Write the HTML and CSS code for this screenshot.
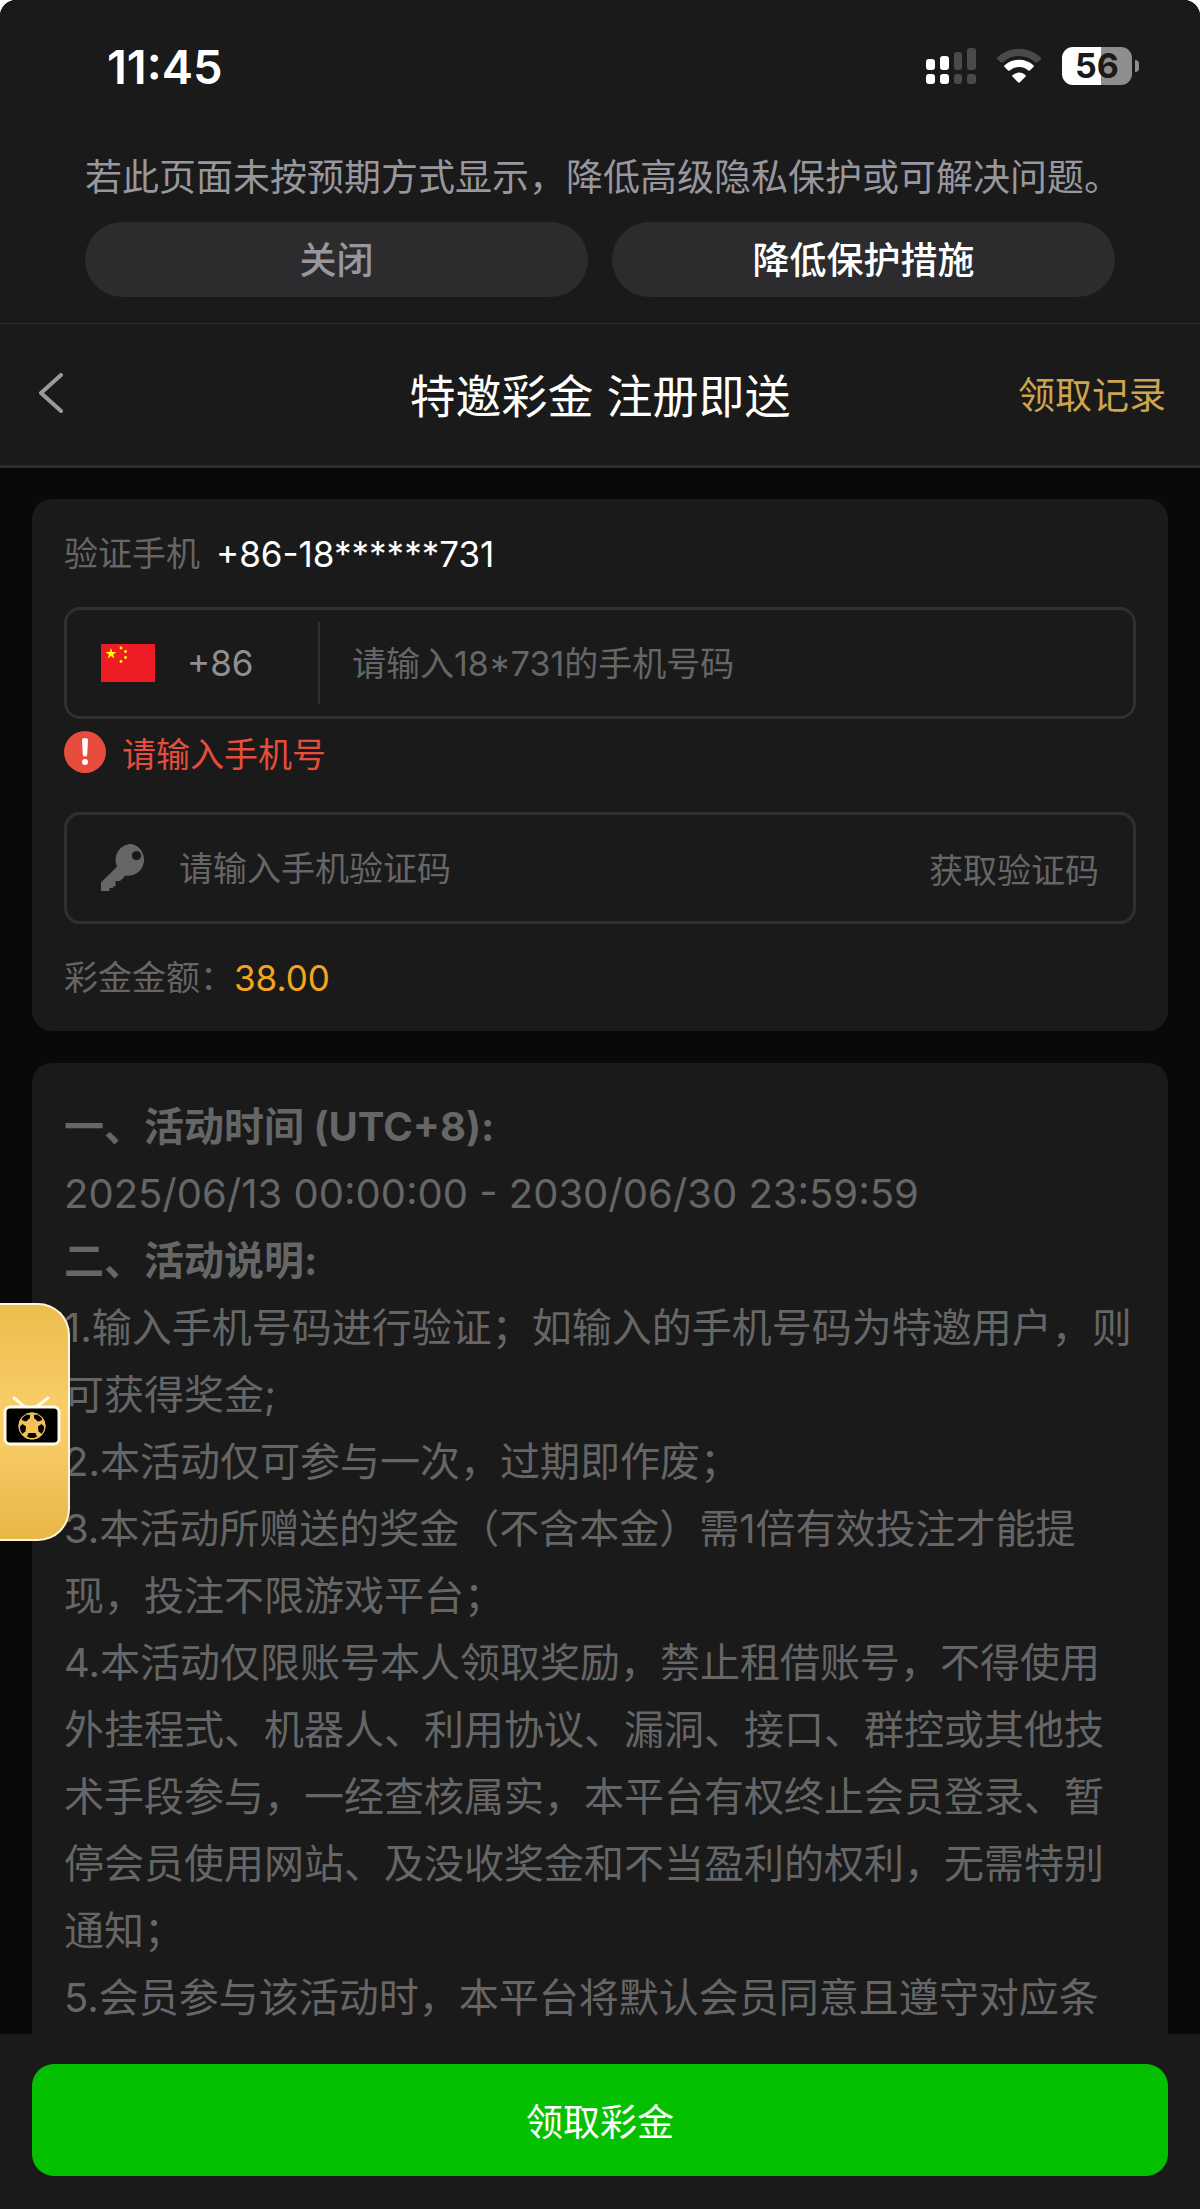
FILE: index.html
```html
<!DOCTYPE html>
<html lang="zh-CN">
<head>
<meta charset="utf-8">
<meta name="viewport" content="width=device-width, initial-scale=1">
<title>特邀彩金 注册即送</title>
<link rel="stylesheet" href="styles.css">
</head>
<body>
<div class="app">
  <div class="top">
    <div class="status">
      <span class="status-time">11:45</span>
      <div class="status-icons">
        <svg width="50" height="38" viewBox="0 0 50 38" aria-hidden="true">
          <g fill="#fff"><rect x="0" y="12" width="9" height="11" rx="3"/><rect x="14" y="9" width="9" height="14" rx="3"/><rect x="0" y="27" width="9" height="10" rx="3"/><rect x="14" y="27" width="9" height="10" rx="3"/></g>
          <g fill="#4a4a4a"><rect x="28" y="5" width="8" height="18" rx="3"/><rect x="41" y="1" width="9" height="22" rx="3"/><rect x="28" y="27" width="8" height="10" rx="3"/><rect x="41" y="27" width="9" height="10" rx="3"/></g>
        </svg>
        <svg width="46" height="38" viewBox="0 0 46 38" aria-hidden="true">
          <path d="M1.200 10.600a31 31 0 0 1 43.600 0q1 1-.1 2l-3.700 2.600q-1 .8-2 0a23.500 23.500 0 0 0-32 0q-1 .8-2 0l-3.700-2.600q-1.100-1-.1-2z" fill="#4a4a4a"/>
          <path d="M8.600 18.300a21.500 21.500 0 0 1 28.800 0q.9.900 0 1.800l-3.200 3.200q-.9.800-1.900.1a14.500 14.500 0 0 0-18.600 0q-1 .7-1.900-.1l-3.200-3.200q-.9-.9 0-1.800z" fill="#fff"/>
          <path d="M16.600 27.900a11 11 0 0 1 12.800 0q.9.800.1 1.700l-5.500 5.600q-1 .9-2 0l-5.500-5.600q-.8-.9.100-1.700z" fill="#fff"/>
        </svg>
        <div class="battery"><span class="battery-body">56</span><span class="battery-tip"></span></div>
      </div>
    </div>
    <p class="notice">若此页面未按预期方式显示，降低高级隐私保护或可解决问题。</p>
    <div class="notice-actions">
      <button type="button" class="pill">关闭</button>
      <button type="button" class="pill pill-strong">降低保护措施</button>
    </div>
  </div>

  <header class="nav">
    <a href="#" class="back" aria-label="返回">
      <svg width="26" height="40" viewBox="0 0 26 40" fill="none" stroke="#9a9a9a" stroke-width="4" stroke-linecap="round" stroke-linejoin="round" aria-hidden="true"><path d="M23 2 3 20l20 18"/></svg>
    </a>
    <h1 class="title">特邀彩金 注册即送</h1>
    <a href="#" class="records">领取记录</a>
  </header>

  <main class="main">
    <form class="card verify">
      <p class="row"><span>验证手机</span><span class="phone">+86-18******731</span></p>
      <div class="field">
        <button type="button" class="country">
          <svg width="54" height="38" viewBox="0 0 54 38" aria-hidden="true">
            <rect width="54" height="38" fill="#ee1c25"/>
            <g fill="#ff0">
              <path d="m10 4 1.300 4h4.200l-3.400 2.500 1.300 4-3.400-2.500-3.400 2.500 1.300-4L4.500 8h4.200z"/>
              <circle cx="20" cy="4" r="1.400"/><circle cx="24.500" cy="7.500" r="1.400"/><circle cx="24.500" cy="13.500" r="1.400"/><circle cx="20" cy="17.500" r="1.400"/>
            </g>
          </svg>
          <span>+86</span>
        </button>
        <input class="input" type="tel" aria-label="手机号码" placeholder="请输入18*731的手机号码">
      </div>
      <p class="error">
        <svg width="42" height="42" viewBox="0 0 42 42" aria-hidden="true"><circle cx="21" cy="21" r="21" fill="#e74c3c"/><path d="M18 9q0-2 3-2t3 2l-.8 15q-.2 1.500-2.200 1.500t-2.200-1.500z" fill="#fff"/><circle cx="21" cy="31" r="3" fill="#fff"/></svg>
        <span>请输入手机号</span>
      </p>
      <div class="field code">
        <svg width="46" height="48" viewBox="0 0 46 48" aria-hidden="true"><path fill="#666" fill-rule="evenodd" d="M30.500 0a15.500 16 0 1 1-6 31.500L19 37h-4.500v5.500H12V44H8.500v3H0v-8.500l16-15.700A15.500 16 0 0 1 30.500 0zM35.500 7a4.600 4.600 0 1 0 .01 0z"/></svg>
        <input class="input" type="text" aria-label="手机验证码" placeholder="请输入手机验证码">
        <button type="button" class="get-code">获取验证码</button>
      </div>
      <p class="row row-amount"><span>彩金金额：</span><span class="amount">38.00</span></p>
    </form>

    <section class="card rules">
      <h2>一、活动时间 (UTC+8):</h2>
      <p>2025/06/13 00:00:00 - 2030/06/30 23:59:59</p>
      <h2>二、活动说明:</h2>
      <p>1.输入手机号码进行验证；如输入的手机号码为特邀用户，则可获得奖金;</p>
      <p>2.本活动仅可参与一次，过期即作废；</p>
      <p>3.本活动所赠送的奖金（不含本金）需1倍有效投注才能提现，投注不限游戏平台；</p>
      <p>4.本活动仅限账号本人领取奖励，禁止租借账号，不得使用外挂程式、机器人、利用协议、漏洞、接口、群控或其他技术手段参与，一经查核属实，本平台有权终止会员登录、暂停会员使用网站、及没收奖金和不当盈利的权利，无需特别通知；</p>
      <p>5.会员参与该活动时，本平台将默认会员同意且遵守对应条</p>
    </section>
  </main>

  <footer class="bottom">
    <button type="button" class="claim">领取彩金</button>
  </footer>

  <a href="#" class="live" aria-label="赛事直播">
    <svg width="58" height="52" viewBox="0 0 58 52" aria-hidden="true">
      <path d="M11 2l11 9M45 2L33 11" stroke="#fffbe8" stroke-width="3" stroke-linecap="round"/>
      <rect x="2" y="11" width="54" height="37" rx="5" fill="#000" stroke="#fffbe8" stroke-width="3"/>
      <circle cx="29" cy="30" r="13.500" fill="#f3c157"/>
      <path fill="#000" d="m22.500 18 4.500 1v3l-4 3.500-4.500-1.500q.5-4 4-6zM35.500 18l-4.500 1v3l4 3.500 4.500-1.500q-.5-4-4-6zM19.500 28l3.500 2.500-.5 5-3.500 2.500q-2.500-3-2-7.500zM38.500 28 35 30.500l.5 5 3.500 2.500q2.500-3 2-7.500zM25.500 37h7l1.500 3.500q-5 3-10 0z"/>
      <circle cx="29" cy="30" r="13" fill="none" stroke="#f3c157" stroke-width="1"/>
    </svg>
  </a>
</div>
</body>
</html>
```
FILE: styles.css
```css
* {
  box-sizing: border-box;
  margin: 0;
  padding: 0;
}

html {
  background: #fff;
}

body {
  font-family: Inter, "Noto Sans CJK SC", sans-serif;
  font-size: 34px;
  color: #666;
}

button,
input {
  font: inherit;
  color: inherit;
  background: none;
  border: 0;
}

button {
  cursor: pointer;
}

a {
  color: inherit;
  text-decoration: none;
}

svg {
  display: block;
  flex: none;
}

.app {
  position: relative;
  display: flex;
  flex-direction: column;
  min-height: 100vh;
  background: #090909;
  border-radius: 16px 16px 0 0;
  overflow: hidden;
}

/* Status bar and browser notice */
.top {
  padding: 36px 85px 26px;
  background: #1a1a1a;
  border-bottom: 1px solid #2e2e30;
}

.status {
  display: flex;
  align-items: center;
  justify-content: space-between;
  height: 60px;
  margin: 0 -24px 56px 22px;
}

.status-time {
  font-size: 47px;
  font-weight: 600;
  color: #fff;
}

.status-icons {
  display: flex;
  align-items: center;
  gap: 20px;
}

.battery {
  display: flex;
  align-items: center;
  gap: 3px;
}

.battery-body {
  width: 70px;
  border-radius: 11px;
  background: linear-gradient(90deg, #fff 56%, #8e8e8e 56%);
  color: #1a1a1a;
  font-size: 34px;
  font-weight: 700;
  line-height: 38px;
  text-align: center;
}

.battery-tip {
  width: 4px;
  height: 12px;
  border-radius: 0 6px 6px 0;
  background: #8e8e8e;
}

.notice {
  font-size: 37px;
  line-height: 52px;
  color: #98979e;
  text-align: center;
  white-space: nowrap;
}

.notice-actions {
  display: grid;
  grid-template-columns: 1fr 1fr;
  gap: 24px;
  margin-top: 18px;
}

.pill {
  height: 75px;
  padding-bottom: 3px;
  border-radius: 38px;
  background: #2c2c2e;
  color: #98979e;
  font-size: 37px;
  font-weight: 500;
}

.pill-strong {
  color: #fff;
}

/* Page header */
.nav {
  display: grid;
  grid-template-columns: 1fr auto 1fr;
  align-items: center;
  height: 144px;
  padding: 0 34px 4px;
  background: #1a1a1a;
  border-bottom: 3px solid #2e2e2e;
}

.back {
  padding-left: 4px;
}

.title {
  font-size: 46px;
  font-weight: 400;
  color: #fff;
}

.records {
  justify-self: end;
  font-size: 37px;
  color: #cda54f;
}

/* Content */
.main {
  display: flex;
  flex: 1;
  flex-direction: column;
  gap: 32px;
  padding: 31px 32px 0;
}

.card {
  padding: 31px 32px 29px;
  border-radius: 20px;
  background: #1a1a1a;
}

.row {
  display: flex;
  align-items: center;
  gap: 16px;
  line-height: 48px;
}

.row-amount {
  gap: 0;
}

.phone {
  font-size: 35px;
  color: #fff;
}

.amount {
  font-size: 35px;
  color: #f5a51d;
}

.field {
  display: flex;
  align-items: center;
  height: 112px;
  margin-top: 29px;
  padding: 0 34px;
  border: 3px solid #303030;
  border-radius: 16px;
}

.country {
  display: flex;
  align-items: center;
  gap: 32px;
  width: 219px;
  height: 82px;
  border-right: 2px solid #303030;
  font-size: 35px;
  color: #909090;
}

.input {
  flex: 1;
  min-width: 0;
  height: 82px;
  padding: 0 32px;
  outline: 0;
}

.input::placeholder {
  color: #666;
  opacity: 1;
}

.error {
  display: flex;
  align-items: center;
  gap: 16px;
  height: 42px;
  margin-top: 12px;
  color: #e74c3c;
}

.code {
  margin: 39px 0 30px;
}

.rules {
  flex: 1;
  padding: 30px 33px 0 32px;
  border-radius: 20px 20px 0 0;
  font-size: 40px;
  line-height: 67px;
}

.rules h2 {
  font-size: 40px;
  font-weight: 700;
}

/* Bottom action */
.bottom {
  position: sticky;
  bottom: 0;
  padding: 30px 32px 33px;
  background: #1a1a1a;
}

.claim {
  width: 100%;
  height: 112px;
  border-radius: 22px;
  background: #05c000;
  color: #fff;
  font-size: 37px;
}

/* Floating live entry */
.live {
  position: absolute;
  top: 1303px;
  left: 0;
  display: flex;
  align-items: center;
  width: 70px;
  height: 238px;
  padding-left: 3px;
  border: 2px solid #fff6d8;
  border-left: 0;
  border-radius: 0 32px 32px 0;
  background: linear-gradient(#ecbd4e, #f9cd68 45%, #f7ca64 60%, #e8b748);
}
```
